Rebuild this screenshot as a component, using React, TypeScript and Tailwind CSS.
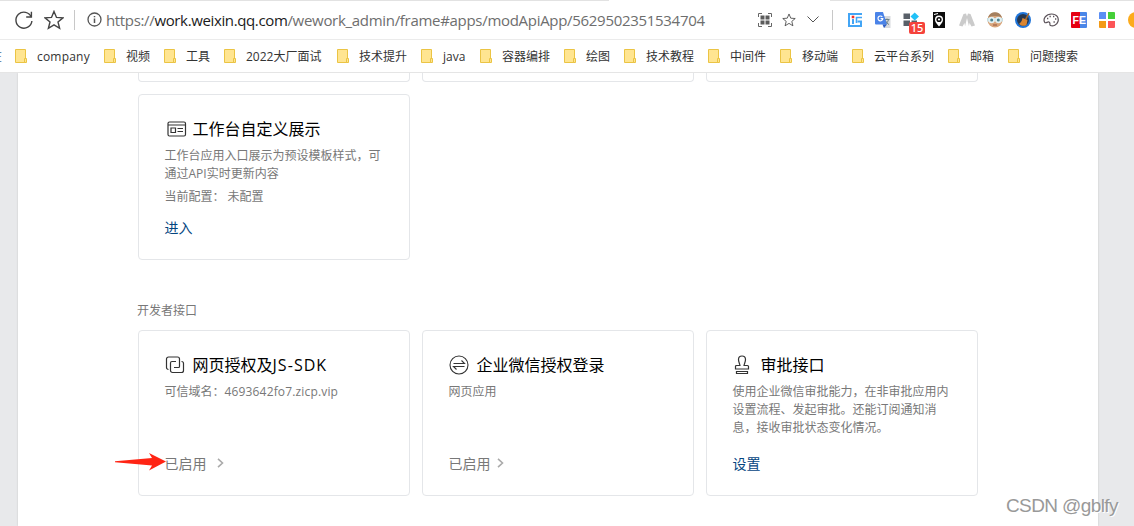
import type { ReactNode } from "react";

const bookmarks = [
  { label: "company", width: "w-[89px]" },
  { label: "视频", width: "w-[60px]" },
  { label: "工具", width: "w-[60px]" },
  { label: "2022大厂面试", width: "w-[113px]" },
  { label: "技术提升", width: "w-[84px]" },
  { label: "java", width: "w-[59px]" },
  { label: "容器编排", width: "w-[84px]" },
  { label: "绘图", width: "w-[60px]" },
  { label: "技术教程", width: "w-[84px]" },
  { label: "中间件", width: "w-[72px]" },
  { label: "移动端", width: "w-[72px]" },
  { label: "云平台系列", width: "w-[96px]" },
  { label: "邮箱", width: "w-[60px]" },
  { label: "问题搜索", width: "w-[84px]" },
];

function FolderIcon() {
  return (
    <svg width="12" height="14" viewBox="0 0 12 14" fill="#ffe591" stroke="#ebc444" className="shrink-0">
      <path d="M.5.5h10v13H.5z" />
      <path d="M9.5 9.5h2v4h-2z" />
    </svg>
  );
}

function QrIcon() {
  return (
    <svg width="14" height="14" viewBox="0 0 14 14" className="shrink-0">
      <path d="M.5 4V.5H4M10 .5h3.500V4M13.500 10v3.500H10M4 13.500H.5V10" fill="none" stroke="#666" />
      <path d="M2.500 2.500h4v4h-4zM7.500 2.500h4v4h-4zM2.500 7.500h4v4h-4zM7.500 7.500h4v4h-4z" fill="#5c5c5c" />
    </svg>
  );
}

function StarIcon({ size, thin }: { size: number; thin?: boolean }) {
  return (
    <svg width={size} height={size} viewBox="0 0 20 20" fill="none" stroke="#444" strokeWidth={thin ? 1.2 : 1.4} className="shrink-0">
      <path d="M10 1.400l2.500 6 6.400.5-4.900 4.100 1.600 6.300-5.600-3.500-5.600 3.500L6 12 1.100 7.900l6.400-.5z" />
    </svg>
  );
}

/* Extension buttons */

function IcExtension() {
  return (
    <svg width="14" height="14" viewBox="0 0 14 14" fill="none" stroke="#43a5f5" strokeWidth="2">
      <path d="M14 1H1v12h12V8.500H9.500" />
      <path d="M14 4.500H8.500V10" strokeWidth="1.600" />
      <path d="M5 6v5" />
      <path d="M3.700 2.700h2.600v2.600H3.700z" fill="#f03028" stroke="none" />
    </svg>
  );
}

function TranslateExtension() {
  return (
    <svg width="16" height="16" viewBox="0 0 16 16">
      <path d="M6 4h9.500v12H9z" fill="#d8dade" />
      <path d="M9.500 7.500h5M12 6.500v1M13.500 7.500c-.5 2.500-2 4-3.500 5M10.500 8.500c.8 2 2 3.300 3.500 4" stroke="#6c8287" fill="none" />
      <path d="M1 0h7l4 12.500H1a1 1 0 0 1-1-1V1a1 1 0 0 1 1-1z" fill="#4a83e8" />
      <path d="M7.500 12.500H12L9 16z" fill="#2f5ec4" />
      <path d="M7.300 4.900a2.400 2.400 0 1 0 .5 1.700H5.600" fill="none" stroke="#fff" strokeWidth="1.200" />
    </svg>
  );
}

function BlocksExtension() {
  return (
    <div className="relative h-4 w-4">
      <svg width="16" height="16" viewBox="0 0 16 16">
        <path d="M.5 1.500H7V7H.5zM.5 8.500H7V14H.5zM8.500 8.500H14V14H8.500z" fill="#596069" />
        <path d="M11.700.5L16 4.500l-4.300 4-4.200-4z" fill="#21c1f7" />
      </svg>
      <div className="absolute left-[6px] top-[10px] h-3 w-4 rounded-[2px] bg-[#f5423b] text-center font-['Noto_Sans',sans-serif] text-[11px] font-medium leading-3 text-white">15</div>
    </div>
  );
}

function PinExtension() {
  return (
    <svg width="12" height="16" viewBox="0 0 12 16">
      <path d="M0 0h12v16H0z" fill="#0c0c0c" />
      <path d="M6 14.500C3 11 2 9.500 2 7.500a4 4 0 0 1 8 0c0 2-1 3.500-4 7z" fill="#fff" />
      <circle cx="6" cy="7.500" r="2.600" fill="#0c0c0c" />
      <circle cx="6" cy="7.500" r="1.100" fill="#fff" />
      <path d="M1 2.500l4-1" stroke="#fff" />
    </svg>
  );
}

function TentExtension() {
  return (
    <svg width="16" height="16" viewBox="0 0 16 16" fill="#cbcbcb">
      <path d="M4.500 2L7 1.500l1 3 1-3 2.500.5L16 13.500l-3.500 1-2-3.500-.5 3H6l-.5-3-2 3.500-3.500-1z" />
      <path d="M8 6l2 8.500H6z" fill="#fff" />
    </svg>
  );
}

function FaceExtension() {
  return (
    <svg width="16" height="16" viewBox="0 0 16 16">
      <circle cx="8" cy="8" r="7.500" fill="#d9a67d" />
      <path d="M1 5.500C2 2 5 .3 8 .3s6 1.700 7 5.200C11 3.500 5 3.500 1 5.500z" fill="#a5805f" />
      <path d="M0 6h16v3.500H0z" fill="#c6dde0" />
      <circle cx="4.500" cy="8" r="3.200" fill="#e4f1f3" />
      <circle cx="11.500" cy="8" r="3.200" fill="#e4f1f3" />
      <circle cx="4.700" cy="8" r="1.500" fill="#4a8290" />
      <circle cx="11.300" cy="8" r="1.500" fill="#4a8290" />
      <path d="M6 13h4" stroke="#95553f" />
    </svg>
  );
}

function BroomExtension() {
  return (
    <svg width="16" height="16" viewBox="0 0 16 16">
      <circle cx="8" cy="8" r="8" fill="#1f74d8" />
      <circle cx="8" cy="8" r="6" fill="#263850" />
      <path d="M13.300.8l1.200.7-3 6.200-1.500-.7z" fill="#a3682d" />
      <path d="M7.500 6l5 2-1 5c-2.500 1.500-5 1-7.500-1 2-1.500 3-3 3.500-6z" fill="#d98532" />
    </svg>
  );
}

function PaletteExtension() {
  return (
    <svg width="16" height="16" viewBox="0 0 16 16" fill="none" stroke="#5a5158" strokeWidth="1.200">
      <path d="M1.800 10.500C-.5 7 3 2 8.500 2S16 6 15 9.500 10 14.500 7.500 13.500c-1.500-.6.500-2.500-1.500-3.500-1.300-.6-3 1.500-4.200.5z" />
      <path d="M4 6.500h1.300M6.500 4.500h1.300M10 4.500h1.300M12 7h1.300M10.500 10h1.300" strokeWidth="1.500" />
    </svg>
  );
}

function FeExtension() {
  return (
    <svg width="16" height="16" viewBox="0 0 16 16">
      <path d="M1 0h8v16H1a1 1 0 0 1-1-1V1a1 1 0 0 1 1-1z" fill="#e60012" />
      <path d="M9 0h6a1 1 0 0 1 1 1v14a1 1 0 0 1-1 1H9z" fill="#4a86e8" />
      <text x="8.300" y="12" textAnchor="middle" fontSize="10.500" fontWeight="700" fill="#fff" fontFamily="Liberation Sans, sans-serif">FE</text>
    </svg>
  );
}

function TilesExtension() {
  return (
    <svg width="16" height="16" viewBox="0 0 16 16">
      <path d="M1 0h6v7H0V1a1 1 0 0 1 1-1z" fill="#5b8ff5" />
      <path d="M9 0h6a1 1 0 0 1 1 1v6H9z" fill="#45cf38" />
      <path d="M0 9h7v7H1a1 1 0 0 1-1-1z" fill="#f39a16" />
      <path d="M9 9h7v6a1 1 0 0 1-1 1H9z" fill="#fc5557" />
    </svg>
  );
}

const extensions = [
  IcExtension,
  TranslateExtension,
  BlocksExtension,
  PinExtension,
  TentExtension,
  FaceExtension,
  BroomExtension,
  PaletteExtension,
  FeExtension,
  TilesExtension,
];

function Toolbar() {
  return (
    <div className="flex h-10 items-center border-b border-[#ebebeb] pl-[14px]">
      <svg width="20" height="20" viewBox="0 0 20 20" fill="none" stroke="#444" strokeWidth="1.400" className="shrink-0">
        <path d="M17.300 7A8 8 0 1 0 17.900 11" />
        <path d="M17.400 1.800v5.200h-5.200" />
      </svg>
      <div className="ml-[10px] shrink-0"><StarIcon size={20} /></div>
      <div className="ml-[10px] h-5 w-px shrink-0 bg-[#c8c8c8]" />
      <svg className="ml-3 shrink-0" width="15" height="15" viewBox="0 0 15 15" fill="none" stroke="#555" strokeWidth="1.300">
        <circle cx="7.500" cy="7.500" r="6.500" />
        <path d="M7.500 6.500V11M7.500 4v1.300" strokeWidth="1.500" />
      </svg>
      <div className="ml-1 w-[652px] shrink-0 whitespace-nowrap text-[15px] leading-5 text-[#6e6e6e]">
        <span className="tracking-[-0.340px]">https://</span>
        <span className="tracking-[-0.370px] text-[#1b1b1b]">work.weixin.qq.com</span>
        <span className="tracking-[-0.300px]">/wework_admin/frame#apps/modApiApp/5629502351534704</span>
      </div>
      <QrIcon />
      <div className="ml-[10px] shrink-0"><StarIcon size={14} thin /></div>
      <svg width="12" height="7" viewBox="0 0 12 7" fill="none" stroke="#555" className="ml-[11px] shrink-0">
        <path d="M.5.500L6 6 11.500.500" />
      </svg>
      <div className="ml-[13px] h-5 w-px shrink-0 bg-[#c8c8c8]" />
      <div className="ml-2 flex shrink-0 items-center">
        {extensions.map((Icon, i) => (
          <div key={i} className="flex w-7 justify-center"><Icon /></div>
        ))}
      </div>
      <div className="ml-[7px] h-4 w-4 shrink-0 rounded-full bg-[#fcab1c]" />
    </div>
  );
}

function BookmarkBar() {
  return (
    <div className="flex h-[33px] items-center border-b border-[#e5e5e5] text-[12px] text-[#333]">
      <div className="flex w-[2px] shrink-0 justify-end overflow-hidden pt-[2px] text-[#456a98]">
        <span>在</span>
      </div>
      <div className="w-[13px] shrink-0" />
      {bookmarks.map((b) => (
        <div key={b.label} className={`flex shrink-0 items-center gap-[10px] ${b.width}`}>
          <FolderIcon />
          <span className={`whitespace-nowrap pt-[2px] ${b.label === "company" ? "tracking-[0.200px]" : ""}`}>{b.label}</span>
        </div>
      ))}
    </div>
  );
}

/* Card icons */

const DisplayIcon = () => (
  <svg width="20" height="16" viewBox="0 0 20 16" fill="none" stroke="#333" strokeWidth="1.200" className="ml-[2px]">
    <rect x="1" y="1" width="17.500" height="14" rx="1.500" />
    <path d="M1 4h17.500M4 7h4.500v4.500H4zM10.500 7.500h5.500M10.500 10.500h5.500" />
  </svg>
);

const LinkIcon = () => (
  <svg width="20" height="18" viewBox="0 0 20 18" fill="none" stroke="#333" strokeWidth="1.200">
    <path d="M3.500 13.500A2 2 0 0 1 1.500 11.500V3a2 2 0 0 1 2-2h9a2 2 0 0 1 2 2v7.500a1 1 0 0 1-1 1H9" />
    <path d="M16.500 5.500a2 2 0 0 1 2 2V14.500a2 2 0 0 1-2 2h-9a2 2 0 0 1-2-2V7a1.500 1.500 0 0 1 1.500-1.500H11" />
  </svg>
);

const LoginIcon = () => (
  <svg width="20" height="20" viewBox="0 0 20 20" fill="none" stroke="#333" strokeWidth="1.100" className="ml-[0.500px]">
    <circle cx="10" cy="10" r="9" />
    <path d="M4.500 8.500h11L12.500 5.500M15.500 11.500h-11l3 3" />
  </svg>
);

const StampIcon = () => (
  <svg width="16" height="20" viewBox="0 0 16 20" fill="none" stroke="#333" strokeWidth="1.200" className="ml-[1px]">
    <path d="M6 10.500C5.700 8.500 4.500 7 4.500 4.500a3.500 3.500 0 0 1 7 0C11.500 7 10.300 8.500 10 10.500h3.500a1 1 0 0 1 1 1V14h-13v-2.500a1 1 0 0 1 1-1z" />
    <path d="M2.500 16.500h11v2h-11z" />
  </svg>
);

function Chevron({ className }: { className: string }) {
  return (
    <svg width="7" height="10" viewBox="0 0 7 10" fill="none" stroke="#aaa" strokeWidth="1.600" className={className}>
      <path d="M1 .8L5.500 5 1 9.200" />
    </svg>
  );
}

interface CardProps {
  icon: ReactNode;
  title: ReactNode;
  desc: ReactNode;
  extra?: string;
  children: ReactNode;
}

function Card({ icon, title, desc, extra, children }: CardProps) {
  return (
    <div className="flex h-[166px] w-[272px] flex-col rounded-[4px] border border-[#e4e6e9] pb-[22px] pl-[25.500px] pt-[23px]">
      <div className="flex h-[22px] items-center text-[16px] text-black">
        <div className="w-7 shrink-0">{icon}</div>
        <span className="whitespace-nowrap">{title}</span>
      </div>
      <div className="mt-[7px] whitespace-nowrap text-[12px] leading-[18px] text-[#787878]">{desc}</div>
      {extra && <div className="mt-[5px] whitespace-nowrap text-[12px] leading-[18px] text-[#787878]">{extra}</div>}
      <div className="mt-auto flex h-5 items-center text-[14px] text-[#787878]">{children}</div>
    </div>
  );
}

function RedArrow() {
  return (
    <svg width="52" height="18" viewBox="0 0 52 18" className="absolute left-[115px] top-[453px]">
      <path d="M0 8.300L37 5 34 0 51 8.600 34 17.500 37 12.500 0 9.300z" fill="#ff2414" />
    </svg>
  );
}

export default function App() {
  return (
    <div className="relative h-[526px] w-[1134px] overflow-hidden bg-white font-['Open_Sans','Noto_Sans_CJK_SC',sans-serif]">
      <div className="absolute left-0 top-0 h-px w-[609px] bg-[#e2e2e2]" />
      <div className="absolute right-0 top-0 h-px w-[304px] bg-[#e2e2e2]" />
      <Toolbar />
      <BookmarkBar />
      <div className="h-[453px] bg-[#e8e9eb] pl-[18px] pr-9">
        <div className="h-full bg-white pl-[120px] shadow-[0_0_2px_rgba(0,0,0,0.15)] [clip-path:inset(0_-3px)]">
          <div className="flex gap-3">
            <div className="h-[9px] w-[272px] rounded-b-[4px] border border-t-0 border-[#e4e6e9]" />
            <div className="h-[9px] w-[272px] rounded-b-[4px] border border-t-0 border-[#e4e6e9]" />
            <div className="h-[9px] w-[272px] rounded-b-[4px] border border-t-0 border-[#e4e6e9]" />
          </div>
          <div className="mt-3">
            <Card
              icon={<DisplayIcon />}
              title="工作台自定义展示"
              desc={<>工作台应用入口展示为预设模板样式，可<br />通过API实时更新内容</>}
              extra="当前配置： 未配置"
            >
              <span className="text-[#04457f]">进入</span>
            </Card>
          </div>
          <div className="-ml-px mt-[42px] h-[18px] text-[12px] leading-[18px] text-[#787878]">开发者接口</div>
          <div className="mt-[10px] flex gap-3">
            <Card
              icon={<LinkIcon />}
              title={<>网页授权及<span className="tracking-[1.050px]">JS-SDK</span></>}
              desc={<>可信域名：<span className="tracking-[0.160px]">4693642fo7.zicp.vip</span></>}
            >
              已启用
              <Chevron className="ml-[10px]" />
            </Card>
            <Card icon={<LoginIcon />} title="企业微信授权登录" desc="网页应用">
              已启用
              <Chevron className="ml-[6px]" />
            </Card>
            <Card
              icon={<StampIcon />}
              title="审批接口"
              desc={<>使用企业微信审批能力，在非审批应用内<br />设置流程、发起审批。还能订阅通知消<br />息，接收审批状态变化情况。</>}
            >
              <span className="text-[#04457f]">设置</span>
            </Card>
          </div>
        </div>
      </div>
      <RedArrow />
      <div className="absolute left-[1006px] top-[495px] whitespace-nowrap font-['Liberation_Sans',sans-serif] text-[19px] leading-[22px] tracking-[-0.600px] text-[#999] [text-shadow:1px_1px_0_#fff]">
        CSDN @gblfy
      </div>
    </div>
  );
}
